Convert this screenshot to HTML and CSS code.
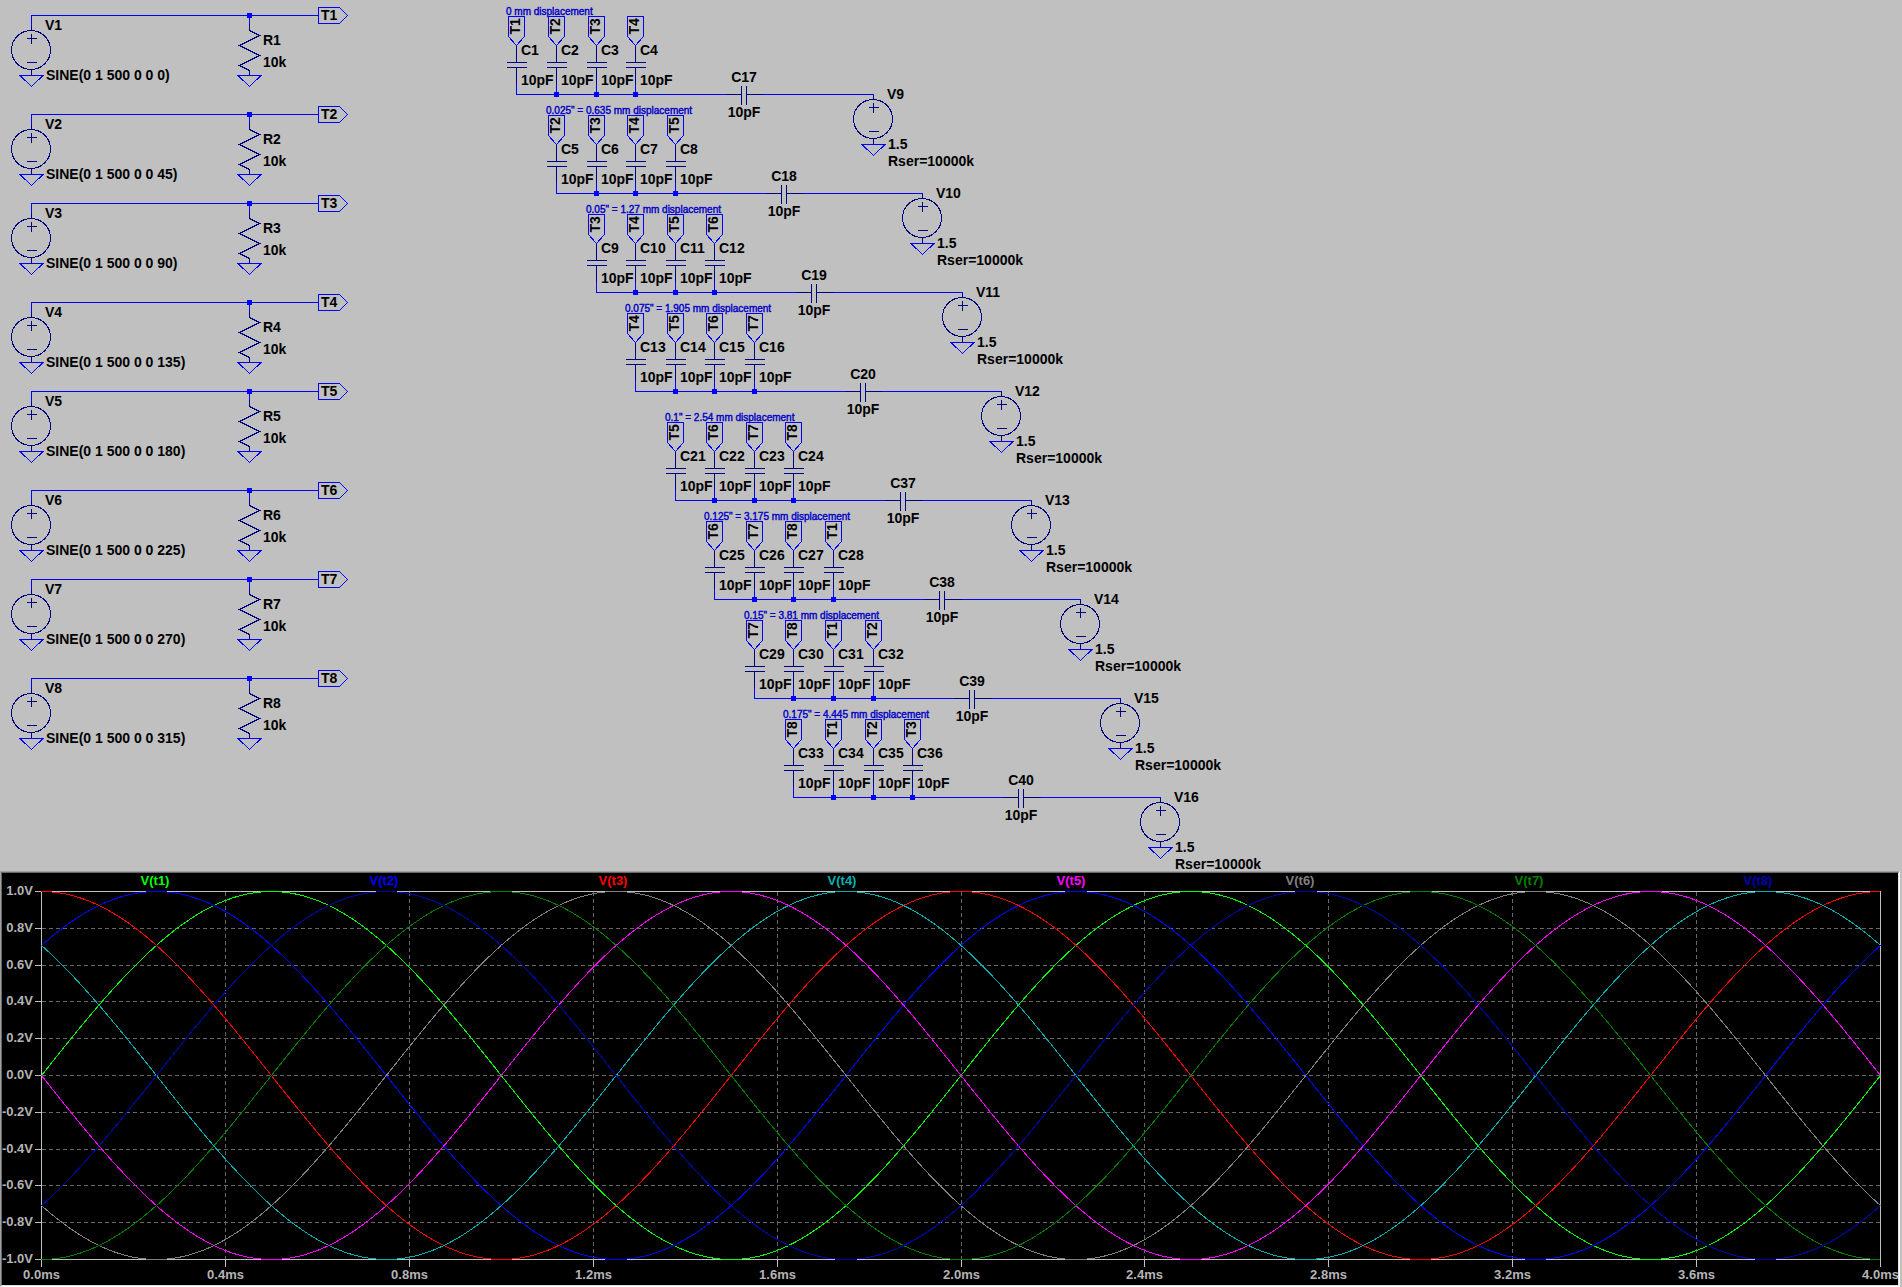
FILE: index.html
```html
<!DOCTYPE html>
<html lang="en">
<head>
<meta charset="utf-8">
<title>Capacitive displacement sensor simulation</title>
<link rel="stylesheet" href="styles.css">
</head>
<body>
<main class="workspace">
  <svg class="schematic" id="schematic" viewBox="0 0 1902 871" preserveAspectRatio="xMinYMin meet" role="img" aria-label="Circuit schematic"></svg>
  <section class="waveform" aria-label="Waveform viewer">
    <svg class="plot" id="plot"></svg>
  </section>
</main>
<script src="app.js"></script>
</body>
</html>
```
FILE: styles.css
```css
* {
  box-sizing: border-box;
}

body {
  margin: 0;
  background: #c0c0c0;
  font-family: "Liberation Sans", Arial, sans-serif;
  font-weight: bold;
}

.workspace {
  display: flex;
  flex-direction: column;
  min-height: 100vh;
}

.schematic {
  display: block;
  width: 100%;
  flex: none;
  font-size: 14px;
}

.schematic text {
  fill: #000;
}

.schematic .caption {
  fill: #0000c8;
  stroke: #0000c8;
  stroke-width: 0.4;
  font-size: 10px;
  font-weight: normal;
}

.wire,
.symbol {
  fill: none;
  stroke-width: 1;
  shape-rendering: crispEdges;
}

.wire {
  stroke: #00f;
}

.symbol {
  stroke: #000080;
}

.node {
  fill: #00f;
  shape-rendering: crispEdges;
}

.middle {
  text-anchor: middle;
}

.end {
  text-anchor: end;
}

.waveform {
  position: relative;
  flex: 1;
  min-height: 320px;
  margin-right: 2px;
  background: #000;
  border: 1px solid;
  border-color: #a0a0a0 #fff #fff #a0a0a0;
}

.plot {
  position: absolute;
  inset: 0;
  width: 100%;
  height: 100%;
  border: 1px solid;
  border-color: #696969 #e3e3e3 #e3e3e3 #696969;
  font-size: 13px;
}

.axis,
.grid,
.trace {
  fill: none;
  stroke-width: 1;
  shape-rendering: crispEdges;
}

.axis {
  stroke: #c0c0c0;
}

.grid {
  stroke: #666;
  stroke-dasharray: 4 3;
}

.axis-label {
  fill: #b4b4b4;
}
```
FILE: app.js
```js
const NS = "http://www.w3.org/2000/svg";

function add(parent, name, attrs, content) {
  const node = document.createElementNS(NS, name);
  for (const key in attrs) node.setAttribute(key, attrs[key]);
  if (content !== undefined) node.textContent = content;
  parent.appendChild(node);
  return node;
}

const sheet = document.getElementById("schematic");
const path = (cls, d) => add(sheet, "path", { class: cls, d });
const label = (x, y, content, cls) =>
  add(sheet, "text", cls ? { x, y, class: cls } : { x, y }, content);
const junction = (x, y) =>
  add(sheet, "rect", { class: "node", x: x - 2.5, y: y - 2.5, width: 5, height: 5 });

function ground(x, y) {
  path("wire", `M${x - 11.5} ${y}H${x + 11.5}L${x} ${y + 11}Z`);
}

// Voltage source whose top lead ends at (x, y)
function source(x, y, name, values) {
  path("symbol", `M${x} ${y}V${y + 5}M${x - 5} ${y + 13}h10M${x} ${y + 8}v10M${x - 5} ${y + 37}h10M${x} ${y + 44}V${y + 50}`);
  add(sheet, "circle", { class: "symbol", cx: x - 0.5, cy: y + 24.5, r: 19.5 });
  ground(x, y + 50);
  label(x + 13.5, y + 4.5, name);
  values.forEach((v, i) => label(x + 14.5, y + 54.5 + 17 * i, v));
}

// Phase-shifted drive signals
[15.5, 114.5, 203.5, 302.5, 391.5, 490.5, 579.5, 678.5].forEach((y, i) => {
  const n = i + 1;
  path("wire", `M31.5 ${y + 10}V${y}H318.5M249.5 ${y}v8`);
  source(31.5, y + 10, "V" + n, [`SINE(0 1 500 0 0 ${45 * i})`]);
  path("symbol", `M249.5 ${y + 8}v7l10 5l-20 10l20 10l-20 10l10 5v5`);
  ground(249.5, y + 60);
  junction(249.5, y);
  path("wire", `M318.5 ${y - 8}H339.5L347.5 ${y}L339.5 ${y + 8}H318.5Z`);
  label(263, y + 29.5, "R" + n);
  label(263, y + 51.5, "10k");
  label(321, y + 4.5, "T" + n);
});

const columns = [516.5, 556.5, 596.5, 635.5, 675.5, 714.5, 754.5, 793.5, 833.5, 873.5, 912.5];
const pickups = [
  { y: 94.5, caption: "0 mm displacement", first: 1, out: 17, outX: 744, srcX: 873.5 },
  { y: 193.5, caption: '0.025" = 0.635 mm displacement', first: 5, out: 18, outX: 784, srcX: 922.5 },
  { y: 292.5, caption: '0.05" = 1.27 mm displacement', first: 9, out: 19, outX: 814, srcX: 962.5 },
  { y: 391.5, caption: '0.075" = 1.905 mm displacement', first: 13, out: 20, outX: 863, srcX: 1001.5 },
  { y: 500.5, caption: '0.1" = 2.54 mm displacement', first: 21, out: 37, outX: 903, srcX: 1031.5 },
  { y: 599.5, caption: '0.125" = 3.175 mm displacement', first: 25, out: 38, outX: 942, srcX: 1080.5 },
  { y: 698.5, caption: '0.15" = 3.81 mm displacement', first: 29, out: 39, outX: 972, srcX: 1120.5 },
  { y: 797.5, caption: '0.175" = 4.445 mm displacement', first: 33, out: 40, outX: 1021, srcX: 1160.5 }
];

pickups.forEach((p, g) => {
  const y = p.y;
  path("wire", `M${columns[g]} ${y}H${p.outX - 18}M${p.outX + 18} ${y}H${p.srcX}`);
  label(columns[g] - 10.5, y - 79.5, p.caption, "caption");
  for (let k = 0; k < 4; k++) {
    const x = columns[g + k];
    path("wire", `M${x - 8} ${y - 58}V${y - 78}H${x + 8}V${y - 58}L${x} ${y - 49}ZM${x} ${y - 11}V${y}`);
    path("symbol", `M${x} ${y - 49}V${y - 32}M${x - 10} ${y - 32}h20M${x - 10} ${y - 27}h20M${x} ${y - 27}V${y - 11}`);
    if (k > 0) junction(x, y);
    add(sheet, "text", { transform: `translate(${x + 3.5} ${y - 60}) rotate(-90)` }, "T" + ((g + k) % 8 + 1));
    label(x + 4.5, y - 39.5, "C" + (p.first + k));
    label(x + 4.5, y - 9.5, "10pF");
  }
  const c = p.outX + 0.5;
  path("symbol", `M${c - 19} ${y}H${c - 3}M${c - 3} ${y - 9}v19M${c + 2} ${y - 9}v19M${c + 2} ${y}H${c + 19}`);
  label(p.outX, y - 12.5, "C" + p.out, "middle");
  label(p.outX, y + 22.5, "10pF", "middle");
  source(p.srcX, y, "V" + (9 + g), ["1.5", "Rser=10000k"]);
});

// Waveform viewer: eight 500 Hz sines, 45 degrees apart, over 4 ms
const traceColors = ["#00ff00", "#0000ff", "#ff0000", "#00b0b0", "#ff00ff", "#808080", "#008000", "#0000b0"];
const plot = document.getElementById("plot");

function drawPlot() {
  plot.replaceChildren();
  const w = plot.clientWidth, h = plot.clientHeight;
  const left = 39.5, right = w - 17.5, top = 18.5, bottom = h - 25.5;
  const snap = v => Math.floor(v) + 0.5;
  const xAt = t => left + (right - left) * t / 4;
  const yAt = v => top + (bottom - top) * (1 - v) / 2;

  for (let i = 0; i <= 10; i++) {
    const x = snap(xAt(i * 0.4)), v = 1 - i * 0.2, y = snap(yAt(v));
    if (i > 0 && i < 10) {
      add(plot, "path", { class: "grid", d: `M${x} ${top}V${bottom}M${left} ${y}H${right}` });
    }
    add(plot, "path", { class: "axis", d: `M${x} ${bottom}v7M${left - 7} ${y}h7` });
    add(plot, "text", { class: "axis-label middle", x, y: bottom + 19.5 }, (i * 0.4).toFixed(1) + "ms");
    add(plot, "text", { class: "axis-label end", x: left - 8.5, y: y + 3.5 },
      (Math.abs(v) < 0.01 ? "0.0" : v.toFixed(1)) + "V");
  }
  add(plot, "path", { class: "axis", d: `M${left} ${top}H${right}V${bottom}H${left}Z` });

  traceColors.forEach((color, i) => {
    let d = "";
    for (let x = left; x <= right; x += 3) {
      const t = (x - left) / (right - left) * 4;
      const v = Math.sin(Math.PI * t + i * Math.PI / 4);
      d += (d ? "L" : "M") + x + " " + yAt(v).toFixed(2);
    }
    add(plot, "path", { class: "trace", stroke: color, d });
    add(plot, "text", { class: "middle", fill: color, x: 153 + i * (right - left - 7) / 8, y: 12 }, `V(t${i + 1})`);
  });
}

drawPlot();
window.addEventListener("resize", drawPlot);
```
